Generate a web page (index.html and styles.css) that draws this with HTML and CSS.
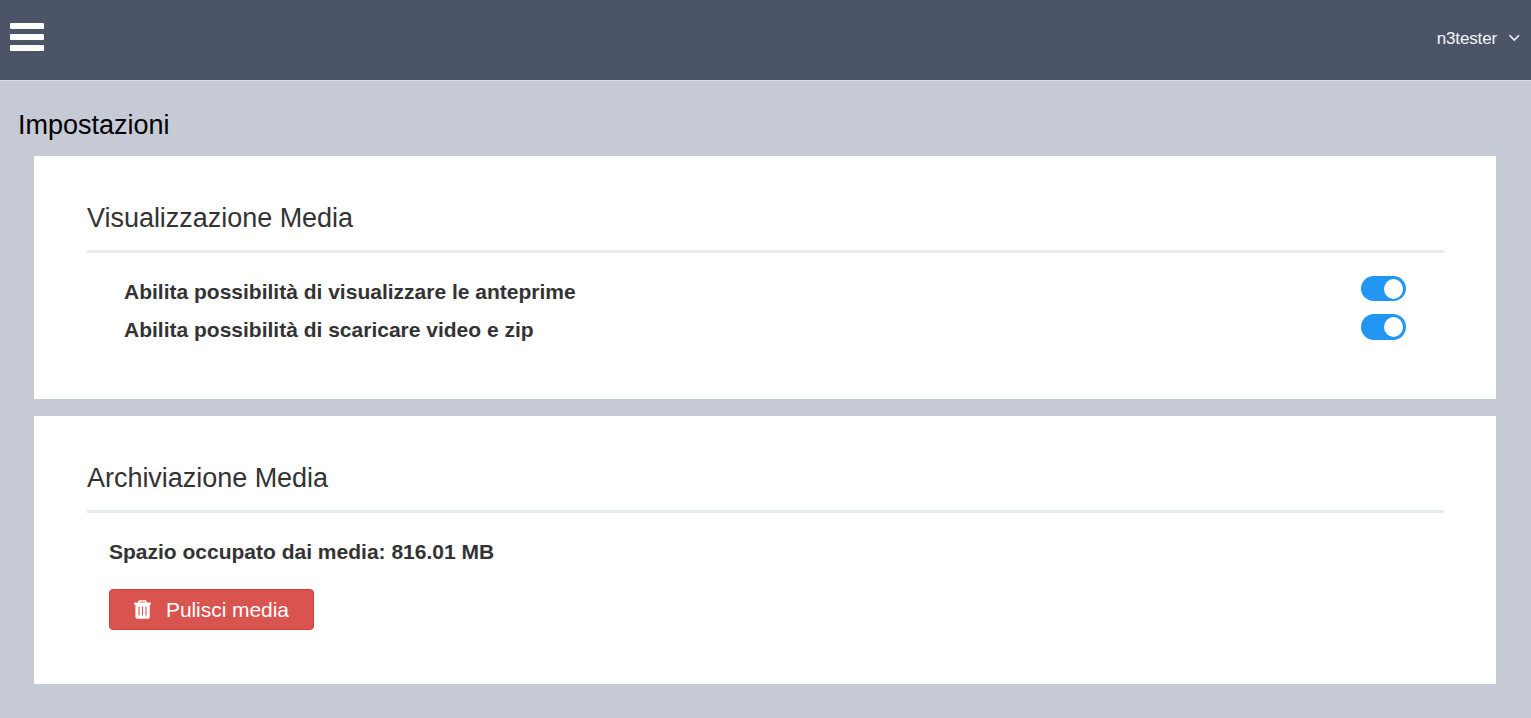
FILE: index.html
```html
<!DOCTYPE html>
<html lang="it">
<head>
<meta charset="utf-8">
<title>Impostazioni</title>
<link rel="stylesheet" href="styles.css">
</head>
<body>
<header class="topbar">
  <button class="menu" aria-label="Menu"><span></span><span></span><span></span></button>
  <div class="user"><span class="user-name">n3tester</span>
    <svg class="chevron" width="12" height="8" viewBox="0 0 12 8"><path d="M1.5 1.3 6.3 6 11 1.3" fill="none" stroke="currentColor" stroke-width="1.6"/></svg>
  </div>
</header>
<main class="content">
  <h1 class="page-title">Impostazioni</h1>
  <section class="panel panel-view">
    <h2 class="panel-title">Visualizzazione Media</h2>
    <div class="options">
      <div class="option"><span>Abilita possibilità di visualizzare le anteprime</span><span class="switch"></span></div>
      <div class="option"><span>Abilita possibilità di scaricare video e zip</span><span class="switch switch-tall"></span></div>
    </div>
  </section>
  <section class="panel panel-storage">
    <h2 class="panel-title">Archiviazione Media</h2>
    <div class="storage">
      <p class="usage">Spazio occupato dai media: 816.01 MB</p>
      <button class="danger">
        <svg class="trash" width="17" height="19" viewBox="0 0 17 19"><path fill="currentColor" fill-rule="evenodd" d="M4.3 2.5V1.7Q4.3.2 5.8.2h5.4q1.5 0 1.5 1.5v.8h3.4q.9 0 .9.9v1.3h-1.2v12.4q0 1.7-1.7 1.7H3.1q-1.7 0-1.7-1.7V4.7H.1V3.4q0-.9.9-.9zM6 2.5h5v-.7H6zM4.5 6.4v9.2h1.1V6.4zM8 6.4v9.2h1.1V6.4zM11.5 6.4v9.2h1.1V6.4z"/></svg>
        <span>Pulisci media</span>
      </button>
    </div>
  </section>
</main>
</body>
</html>
```
FILE: styles.css
```css
* { box-sizing: border-box; }
body {
  margin: 0;
  height: 718px;
  overflow: hidden;
  background: #c6cad5;
  color: #333;
  font-family: "Liberation Sans", Arial, sans-serif;
}
h1, h2, p { margin: 0; font-weight: 400; }
button { font: inherit; border: 0; padding: 0; }
.topbar {
  height: 81px;
  padding: 0 11px 4px 10px;
  display: flex;
  align-items: center;
  justify-content: space-between;
  background: #4c5468;
  border-bottom: 1px solid #d9dce3;
}
.menu {
  display: flex;
  flex-direction: column;
  gap: 5px;
  width: 34px;
  margin-bottom: 2px;
  background: none;
}
.menu span { height: 6px; border-radius: 1px; background: #fff; }
.user {
  display: flex;
  align-items: center;
  gap: 11px;
  color: #f4f5f7;
  font-size: 17px;
  line-height: 20px;
}
.user-name { padding-top: 2px; letter-spacing: -0.15px; }
.content { padding: 29px 35px 0 34px; }
.page-title {
  margin: 0 0 15px -16px;
  color: #000;
  font-size: 27px;
  line-height: 31px;
}
.panel { background: #fff; padding: 47px 52px 0 53px; }
.panel-view { height: 243px; margin-bottom: 17px; }
.panel-storage { height: 268px; }
.panel-title {
  height: 50px;
  border-bottom: 3px solid #e6e9ee;
  font-size: 27px;
  letter-spacing: -0.03px;
  line-height: 31px;
}
.options { padding: 23px 38px 0 37px; }
.option {
  display: flex;
  justify-content: space-between;
  height: 38px;
  font-size: 21px;
  font-weight: 700;
  line-height: 32px;
}
.switch {
  display: flex;
  justify-content: flex-end;
  width: 45px;
  height: 25px;
  padding: 3px;
  border-radius: 13px;
  background: #2196f3;
}
.switch-tall { height: 26px; }
.switch::after {
  content: "";
  width: 19px;
  height: 20px;
  border-radius: 50%;
  background: #fff;
}
.storage { padding: 27px 22px 0; }
.usage { font-size: 21px; font-weight: 700; line-height: 24px; }
.danger {
  display: flex;
  align-items: center;
  gap: 15px;
  width: 205px;
  height: 41px;
  margin-top: 25px;
  padding: 0 24px;
  border: 1px solid #d43f3a;
  border-radius: 4px;
  background: #d9534f;
  color: #fff;
  font-size: 21px;
  letter-spacing: -0.05px;
  white-space: nowrap;
}
```
